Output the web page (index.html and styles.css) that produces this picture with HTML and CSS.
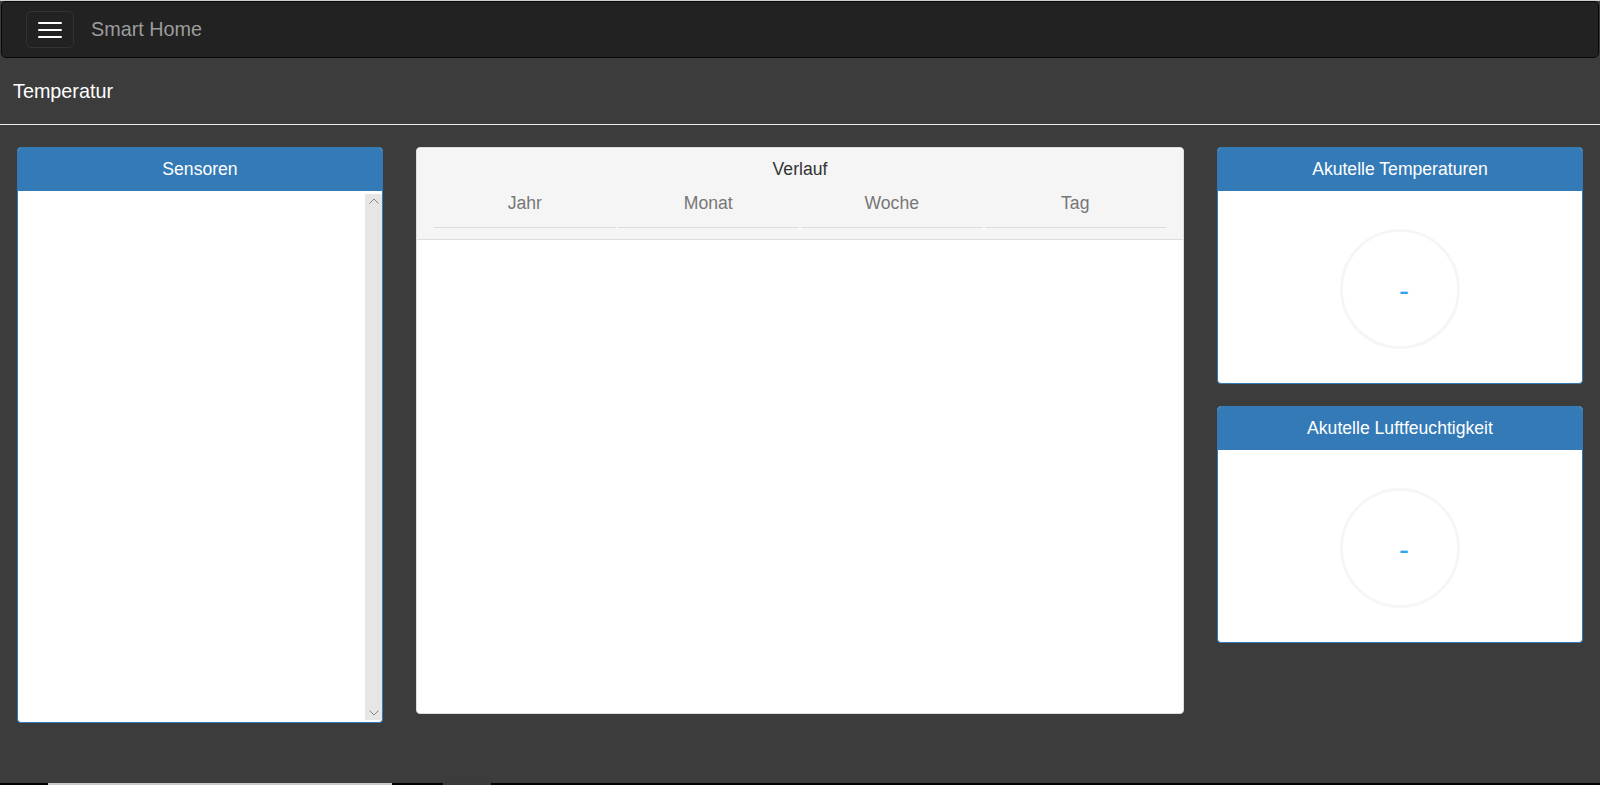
FILE: index.html
```html
<!DOCTYPE html>
<html>
<head>
  <meta charset="utf-8">
  <meta name="viewport" content="width=device-width, initial-scale=1">
  <title>Smart Home</title>
  <link rel="stylesheet" href="styles.css">
</head>
<body>
  <nav class="navbar">
    <button class="navbar-toggle" type="button">
      <span class="icon-bar"></span>
      <span class="icon-bar"></span>
      <span class="icon-bar"></span>
    </button>
    <a class="navbar-brand" href="#">Smart Home</a>
  </nav>

  <div class="page-title">Temperatur</div>

  <main class="content">
    <!-- Sensorliste -->
    <section class="panel panel-primary sensors">
      <div class="panel-heading">Sensoren</div>
      <div class="panel-body sensor-body">
        <ul class="sensor-list"></ul>
        <div class="scroll-rail">
          <svg width="10" height="6" viewBox="0 0 10 6"><polyline points="0.5,5.5 5,1 9.5,5.5" /></svg>
          <svg width="10" height="6" viewBox="0 0 10 6"><polyline points="0.5,0.5 5,5 9.5,0.5" /></svg>
        </div>
      </div>
    </section>

    <!-- Verlauf -->
    <section class="panel panel-default history">
      <div class="panel-heading">
        <div class="panel-title">Verlauf</div>
        <ul class="nav-tabs">
          <li>Jahr</li>
          <li>Monat</li>
          <li>Woche</li>
          <li>Tag</li>
        </ul>
      </div>
      <div class="panel-body chart"></div>
    </section>

    <!-- aktuelle Werte -->
    <div class="gauges">
      <section class="panel panel-primary gauge-panel">
        <div class="panel-heading">Akutelle Temperaturen</div>
        <div class="panel-body gauge-body">
          <div class="gauge"><span class="gauge-value">-</span></div>
        </div>
      </section>
      <section class="panel panel-primary gauge-panel">
        <div class="panel-heading">Akutelle Luftfeuchtigkeit</div>
        <div class="panel-body gauge-body">
          <div class="gauge"><span class="gauge-value">-</span></div>
        </div>
      </section>
    </div>
  </main>

  <div class="taskbar">
    <span class="tb-light"></span>
    <span class="tb-dark"></span>
  </div>
</body>
</html>
```

FILE: styles.css
```css
html, body {
  margin: 0;
  padding: 0;
}

body {
  font-family: "Liberation Sans", Arial, sans-serif;
  background: #3c3c3c;
  color: #333;
  min-height: 100vh;
  box-sizing: border-box;
  border-top: 1px solid #cfcfcf;
  display: flex;
  flex-direction: column;
}

/* Navigation */
.navbar {
  display: flex;
  align-items: center;
  height: 57px;
  box-sizing: border-box;
  margin: 0 1px;
  background: #222;
  border: 1px solid #080808;
  border-radius: 5px;
}

.navbar-toggle {
  display: flex;
  flex-direction: column;
  align-items: center;
  justify-content: center;
  gap: 5px;
  width: 48px;
  height: 37px;
  box-sizing: border-box;
  margin-left: 24px;
  padding: 0;
  background: transparent;
  border: 1px solid #333;
  border-radius: 5px;
  cursor: pointer;
}

.icon-bar {
  display: block;
  width: 24px;
  height: 2px;
  border-radius: 1px;
  background: #fff;
}

.navbar-brand {
  margin-left: 17px;
  font-size: 19.8px;
  color: #9d9d9d;
  text-decoration: none;
}

.page-title {
  display: flex;
  align-items: center;
  height: 67px;
  box-sizing: border-box;
  padding-left: 13px;
  border-bottom: 1px solid #eee;
  font-size: 19.8px;
  color: #fff;
}

/* Inhalt */
.content {
  flex: 1;
  display: grid;
  grid-template-columns: 366px 1fr 366px;
  column-gap: 33px;
  align-items: start;
  padding: 22px 17px 0;
}

.panel {
  background: #fff;
  border: 1px solid transparent;
  border-radius: 4px;
  box-sizing: border-box;
  overflow: hidden;
}

.panel-heading {
  padding: 10px 15px 11px;
  font-size: 17.6px;
  line-height: 22px;
  text-align: center;
}

.panel-primary {
  border-color: #337ab7;
}

.panel-primary > .panel-heading {
  background: #337ab7;
  color: #fff;
}

.panel-default {
  border-color: #ddd;
}

.panel-default > .panel-heading {
  background: #f5f5f5;
  color: #333;
  border-bottom: 1px solid #ddd;
  padding: 10px 17px 11px;
}

/* Sensoren */
.sensors {
  height: 576px;
}

.sensor-body {
  display: flex;
  height: 531px;
  box-sizing: border-box;
  padding: 3px 0 2px;
}

.sensor-list {
  flex: 1;
  margin: 0;
  padding: 0;
  list-style: none;
}

.scroll-rail {
  width: 17px;
  background: #e6e6e6;
  display: flex;
  flex-direction: column;
  align-items: center;
  justify-content: space-between;
  padding: 4px 0 4px;
  box-sizing: border-box;
}

.scroll-rail polyline {
  fill: none;
  stroke: #858585;
  stroke-width: 1;
}

/* Verlauf */
.history {
  height: 567px;
}

.panel-title {
  font-size: 17.6px;
  line-height: 22px;
}

.nav-tabs {
  display: flex;
  gap: 2px;
  margin: 0;
  padding: 0;
  list-style: none;
}

.nav-tabs li {
  flex: 1;
  padding: 12px 0 13px;
  line-height: 22px;
  font-size: 17.6px;
  color: #777;
  text-align: center;
  border-bottom: 1px solid #ddd;
  cursor: pointer;
}

/* Anzeigen */
.gauges {
  display: flex;
  flex-direction: column;
  gap: 22px;
}

.gauge-panel {
  height: 237px;
}

.gauge-body {
  display: flex;
  justify-content: center;
  padding-top: 38px;
}

.gauge {
  display: flex;
  align-items: center;
  justify-content: center;
  width: 120px;
  height: 120px;
  box-sizing: border-box;
  border: 3px solid #f6f6f6;
  border-radius: 50%;
}

.gauge-value {
  padding: 3px 0 0 8px;
  font-size: 30px;
  line-height: 30px;
  color: #2ea4f5;
}

.taskbar {
  display: flex;
  height: 2px;
  background: #000;
}

.tb-light {
  width: 344px;
  margin-left: 48px;
  background: #c8c8c8;
}

.tb-dark {
  width: 48px;
  margin-left: 51px;
  background: #3a3a3a;
}
```
